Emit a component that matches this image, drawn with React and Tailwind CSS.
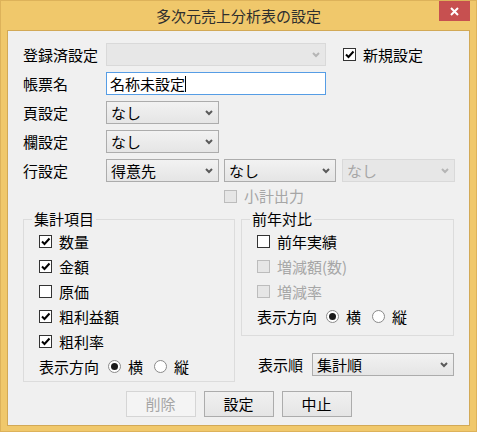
import React from 'react'

const FONT = "font-['Noto_Sans_CJK_JP','Noto_Sans',sans-serif]"

function Chevron({ disabled }) {
  return (
    <svg width="8" height="6" viewBox="0 0 8 6" className="shrink-0">
      <path d="M1 1 L4 4 L7 1" fill="none" stroke={disabled ? '#B5B5B5' : '#5A5A5A'} strokeWidth="2" />
    </svg>
  )
}

function Combo({ className, value, disabled }) {
  return (
    <div
      className={`flex h-[23px] items-center justify-between border pl-[4px] pr-[5px] ${className} ${
        disabled
          ? 'border-[#D9D9D9] bg-[#E7E7E7] text-[#A6A6A6]'
          : 'border-[#ACACAC] bg-gradient-to-b from-[#F2F2F2] to-[#E5E5E5] text-black'
      }`}
    >
      <span>{value}</span>
      <Chevron disabled={disabled} />
    </div>
  )
}

function Check({ checked, disabled, label, className = '' }) {
  return (
    <div className={`flex items-center gap-[7px] ${className}`}>
      <div
        className={`flex h-[13px] w-[13px] items-center justify-center border ${
          disabled ? 'border-[#BCBCBC] bg-[#E6E6E6]' : 'border-[#333333] bg-white'
        }`}
      >
        {checked && (
          <svg width="11" height="11" viewBox="0 0 11 11">
            <path d="M2 5.5 L4.5 8 L9.5 2.5" fill="none" stroke="#000" strokeWidth="2" />
          </svg>
        )}
      </div>
      <span className={disabled ? 'text-[#A6A6A6]' : 'text-black'}>{label}</span>
    </div>
  )
}

function Radio({ checked, label }) {
  return (
    <div className="flex items-center gap-[7px]">
      <div className="flex h-[13px] w-[13px] items-center justify-center rounded-full border border-[#8A8A8A] bg-white">
        {checked && <div className="h-[7px] w-[7px] rounded-full bg-[#1A1A1A]" />}
      </div>
      <span>{label}</span>
    </div>
  )
}

function Direction() {
  return (
    <div className="flex h-[25px] items-center">
      <span className="w-[69px]">表示方向</span>
      <div className="flex items-center gap-[11px]">
        <Radio checked label="横" />
        <Radio label="縦" />
      </div>
    </div>
  )
}

function Group({ title, className, children }) {
  return (
    <div className={`relative border border-[#DCDCDC] pl-[15px] pt-[9px] ${className}`}>
      <span className="absolute left-[8px] top-[-11px] bg-[#F0F0F0] px-[2px] leading-[20px]">{title}</span>
      {children}
    </div>
  )
}

function Button({ children, disabled }) {
  return (
    <div
      className={`flex h-[26px] w-[70px] items-center justify-center border ${
        disabled
          ? 'border-[#D5D5D5] bg-[#F4F4F4] text-[#A6A6A6]'
          : 'border-[#ACACAC] bg-gradient-to-b from-[#F0F0F0] to-[#E5E5E5] text-black'
      }`}
    >
      {children}
    </div>
  )
}

export default function App() {
  return (
    <div className={`flex h-[432px] w-[477px] flex-col border border-[#DDB25A] bg-[#F0C86B] text-[15px] leading-[20px] ${FONT}`}>
      {/* タイトルバー */}
      <div className="relative flex h-[29px] shrink-0 items-center justify-center">
        <span className="text-[#2E2E2E]">多次元売上分析表の設定</span>
        <div className="absolute right-[6px] top-0 flex h-[20px] w-[31px] items-center justify-center bg-[#C75050]">
          <svg width="9" height="9" viewBox="0 0 9 9">
            <path d="M1 1 L8 8 M8 1 L1 8" stroke="#fff" strokeWidth="2" />
          </svg>
        </div>
      </div>

      {/* クライアント領域 */}
      <div className="mx-[6px] h-[396px] border border-[#D2A956] bg-[#F0F0F0] pl-[15px] pt-[12px] text-black">
        <div className="flex h-[23px] items-center">
          <span className="w-[83px]">登録済設定</span>
          <Combo className="w-[220px]" value="" disabled />
          <Check checked label="新規設定" className="ml-[17px]" />
        </div>

        <div className="mt-[6px] flex h-[23px] items-center">
          <span className="w-[83px]">帳票名</span>
          <div className="flex h-[23px] w-[220px] items-center border border-[#569DE5] bg-white pl-[3px]">
            <span>名称未設定</span>
            <span className="h-[16px] w-px bg-black" />
          </div>
        </div>

        <div className="mt-[6px] flex h-[23px] items-center">
          <span className="w-[83px]">頁設定</span>
          <Combo className="w-[113px]" value="なし" />
        </div>

        <div className="mt-[6px] flex h-[23px] items-center">
          <span className="w-[83px]">欄設定</span>
          <Combo className="w-[113px]" value="なし" />
        </div>

        <div className="mt-[6px] flex h-[23px] items-center">
          <span className="w-[83px]">行設定</span>
          <Combo className="w-[113px]" value="得意先" />
          <Combo className="ml-[5px] w-[112px]" value="なし" />
          <Combo className="ml-[6px] w-[113px]" value="なし" disabled />
        </div>

        <div className="mt-[6px] flex h-[16px] items-center pl-[201px]">
          <Check disabled label="小計出力" />
        </div>

        <div className="mt-[15px] flex gap-[6px]">
          <Group title="集計項目" className="h-[163px] w-[212px]">
            <Check checked label="数量" className="h-[25px]" />
            <Check checked label="金額" className="h-[25px]" />
            <Check label="原価" className="h-[25px]" />
            <Check checked label="粗利益額" className="h-[25px]" />
            <Check checked label="粗利率" className="h-[25px]" />
            <Direction />
          </Group>

          <div className="flex flex-col">
            <Group title="前年対比" className="h-[117px] w-[213px]">
              <Check label="前年実績" className="h-[25px]" />
              <Check disabled label="増減額(数)" className="h-[25px]" />
              <Check disabled label="増減率" className="h-[25px]" />
              <Direction />
            </Group>
            <div className="mt-[17px] flex h-[23px] items-center pl-[17px]">
              <span className="w-[54px]">表示順</span>
              <Combo className="w-[142px]" value="集計順" />
            </div>
          </div>
        </div>

        <div className="mt-[9px] flex justify-center gap-[8px] pr-[15px]">
          <Button disabled>削除</Button>
          <Button>設定</Button>
          <Button>中止</Button>
        </div>
      </div>
    </div>
  )
}
